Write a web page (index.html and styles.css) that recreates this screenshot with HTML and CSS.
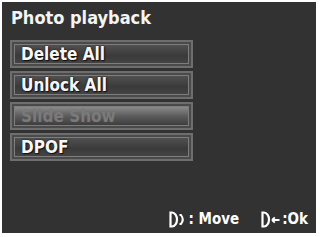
FILE: index.html
```html
<!DOCTYPE html>
<html lang="en">
<head>
    <meta charset="UTF-8">
    <title>Photo playback</title>
    <link rel="stylesheet" href="styles.css">
</head>
<body>
    <div class="screen">
        <h1 class="title">Photo playback</h1>

        <div class="menu">
            <div class="item"><span>Delete All</span></div>
            <div class="item"><span>Unlock All</span></div>
            <div class="item disabled"><span>Slide Show</span></div>
            <div class="item"><span>DPOF</span></div>
        </div>

        <div class="hints">
            <div class="hint">
                <svg width="18" height="17" viewBox="0 0 18 17">
                    <path d="M1.5 1.5 V15.5 H3 A5 7 0 0 0 3 1.5 Z" fill="none" stroke="#fff" stroke-width="2.2"/>
                    <path d="M10.5 4 H12 Q15.5 8.5 12 13 H10.5" fill="none" stroke="#fff" stroke-width="2"/>
                </svg>
                <span>: Move</span>
            </div>
            <div class="hint">
                <svg width="20" height="17" viewBox="0 0 20 17">
                    <path d="M1.5 1.5 V15.5 H3 A5 7 0 0 0 3 1.5 Z" fill="none" stroke="#fff" stroke-width="2.2"/>
                    <path d="M11 9 H18.5 M11 9 L13.8 6.4 M11 9 L13.8 11.6" fill="none" stroke="#fff" stroke-width="1.8"/>
                </svg>
                <span>:Ok</span>
            </div>
        </div>
    </div>
</body>
</html>
```

FILE: styles.css
```css
body {
    margin: 0;
    background: #fff;
    font-family: "DejaVu Sans Condensed", "DejaVu Sans", sans-serif;
    font-stretch: condensed;
}
.screen {
    margin: 2px 4px 4px 2px;
    height: 231px;
    background: #323232;
    display: flex;
    flex-direction: column;
}
.title {
    margin: 0;
    padding: 4px 0 0 9px;
    height: 36px;
    box-sizing: border-box;
    font-size: 18px;
    line-height: 24px;
    font-weight: bold;
    color: #f4f4f4;
}
.menu {
    margin: 2px 0 0 8px;
    width: 183px;
    display: flex;
    flex-direction: column;
    gap: 3px;
}
.item {
    height: 28px;
    box-sizing: border-box;
    border: 2px solid #6e6e6e;
    padding: 2px;
    background: #4a4a4a;
}
.item span {
    display: block;
    height: 100%;
    box-sizing: border-box;
    padding-left: 6px;
    border: 1px solid #7d7d7d;
    background: linear-gradient(#505050, #3a3a3a 60%, #444);
    font-size: 17px;
    font-weight: bold;
    line-height: 19px;
    color: #f6f6f6;
    text-shadow: 0 0 2px #111, 1px 1px 1px #111;
}
.item.disabled span {
    background: linear-gradient(#8a8a8a, #5c5c5c 50%, #3e3e3e);
    color: #7a7a7a;
    text-shadow: none;
}
.hints {
    margin-top: auto;
    margin-bottom: 5px;
    display: flex;
    justify-content: flex-end;
    gap: 22px;
    padding-right: 8px;
}
.hint {
    display: flex;
    align-items: center;
    gap: 1px;
    color: #fff;
    font-size: 15px;
    font-weight: bold;
}
```
